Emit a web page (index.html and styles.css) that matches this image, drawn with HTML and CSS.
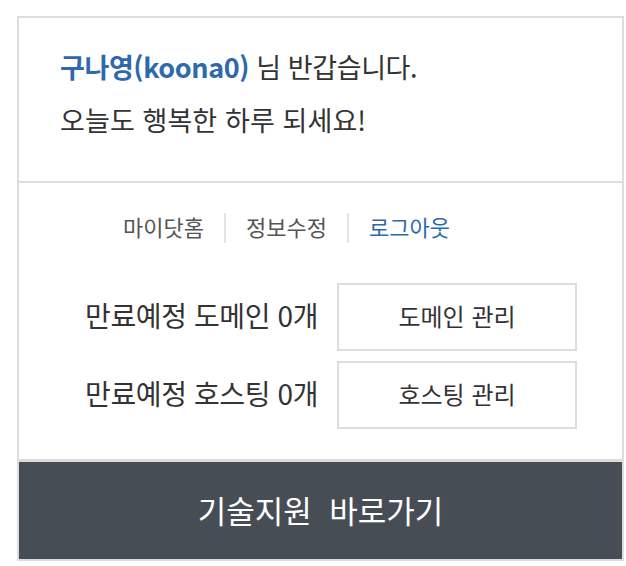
FILE: index.html
```html
<!DOCTYPE html>
<html lang="ko">
<head>
<meta charset="utf-8">
<link rel="stylesheet" href="styles.css">
</head>
<body>
<div class="box">
  <div class="greet">
    <p class="line"><strong class="name">구나영(koona0)</strong> 님 반갑습니다.</p>
    <p class="line line-wide">오늘도 행복한 하루 되세요!</p>
  </div>
  <div class="menu">
    <nav class="nav">
      <a class="nav-item">마이닷홈</a>
      <span class="sep"></span>
      <a class="nav-item">정보수정</a>
      <span class="sep"></span>
      <a class="nav-item nav-blue">로그아웃</a>
    </nav>
    <div class="rows">
      <div class="label">만료예정 도메인 0개</div>
      <a class="btn">도메인 관리</a>
      <div class="label">만료예정 호스팅 0개</div>
      <a class="btn">호스팅 관리</a>
    </div>
  </div>
  <a class="footer">기술지원&nbsp;&nbsp;바로가기</a>
</div>
</body>
</html>
```

FILE: styles.css
```css
* { box-sizing: border-box; }
body {
  margin: 0;
  background: #fff;
  font-family: "Noto Sans CJK KR", "Noto Sans", sans-serif;
  color: #333;
}
.box {
  margin: 16px 0 0 17px;
  width: 607px;
  border: 2px solid #ddd;
}
.greet {
  height: 165px;
  padding: 22px 0 0 41px;
  border-bottom: 2px solid #ddd;
}
.line {
  margin: 0;
  font-size: 27px;
  line-height: 53px;
  letter-spacing: -0.4px;
  color: #333;
}
.line-wide { letter-spacing: 0.1px; }
.name {
  font-weight: 700;
  color: #2e69ac;
}
.menu {
  padding: 30px 45px 30px 0;
}
.nav {
  display: flex;
  align-items: center;
  height: 30px;
  padding-left: 104px;
}
.nav-item {
  font-size: 22px;
  line-height: 30px;
  padding-bottom: 4px;
  color: #555;
}
.nav-blue { color: #2e69ac; }
.sep {
  width: 2px;
  height: 30px;
  background: #e3e3e3;
  margin: 0 20px;
}
.rows {
  margin-top: 40px;
  display: grid;
  grid-template-columns: 1fr 240px;
  grid-auto-rows: 68px;
  column-gap: 19px;
  row-gap: 10px;
  align-items: center;
}
.label {
  text-align: right;
  font-size: 28px;
  letter-spacing: -0.4px;
  padding-bottom: 4px;
  color: #333;
}
.btn {
  height: 68px;
  border: 2px solid #ddd;
  display: flex;
  align-items: center;
  justify-content: center;
  padding-bottom: 3px;
  font-size: 24px;
  color: #333;
}
.footer {
  display: flex;
  align-items: center;
  justify-content: center;
  height: 100px;
  border-top: 3px solid #ddd;
  background: #474d55;
  color: #fff;
  font-size: 31px;
  padding-bottom: 3px;
}
```
